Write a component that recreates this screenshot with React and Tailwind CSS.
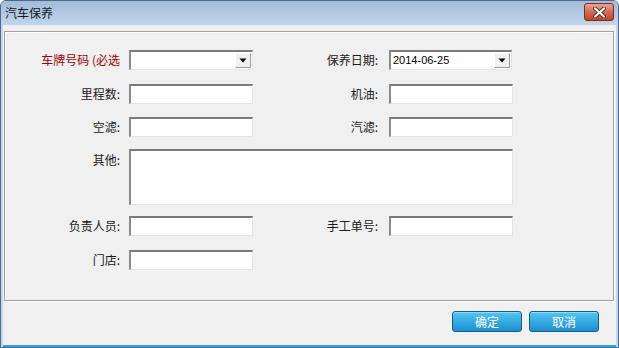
import React from "react";

const FONT = { fontFamily: '"Noto Sans CJK SC", "Liberation Sans", sans-serif' };

function Input({ w = "w-[124px]", children, dropdown }) {
  return (
    <div
      className={`${w} h-[20px] bg-white border-t-2 border-l-2 border-b border-r border-t-[#7a7a7a] border-l-[#8a8a8a] border-b-[#e4e4e4] border-r-[#e4e4e4] flex items-center relative`}
    >
      {children}
      {dropdown && (
        <div className="absolute right-[1px] top-[1px] bottom-[1px] w-[16px] bg-[#f0f0f0] border border-t-white border-l-white border-b-[#9a9a9a] border-r-[#9a9a9a] flex items-center justify-center">
          <svg width="8" height="5" viewBox="0 0 8 5">
            <polygon points="0.5,0.5 7.5,0.5 4,4.5" fill="#000" />
          </svg>
        </div>
      )}
    </div>
  );
}

function Label({ children, w, red }) {
  return (
    <div
      className={`${w} text-right text-[12px] leading-[14px] pr-[2px] ${red ? "text-[#a00000]" : "text-[#1a1a1a]"}`}
    >
      {children}
    </div>
  );
}

export default function App() {
  return (
    <div
      className="w-[619px] h-[348px] flex flex-col bg-[#c3d8ee] border border-[#50698a] rounded-t-[6px] overflow-hidden"
      style={FONT}
    >
      {/* Title bar */}
      <div className="h-[24px] shrink-0 flex items-center justify-between pl-[4px] pr-[4px] bg-gradient-to-b from-[#a3bcda] to-[#c1d5ec]">
        <span className="text-[12px] text-[#101820] leading-none">汽车保养</span>
        <div className="w-[30px] h-[18px] mt-[-2px] rounded-[3px] border border-[#7e2a1c] bg-gradient-to-b from-[#e5a696] via-[#d06a55] to-[#c2432c] flex items-center justify-center">
          <svg width="13" height="11" viewBox="0 0 13 11">
            <path
              d="M2 1.5 L11 9.5 M11 1.5 L2 9.5"
              stroke="#5a2a22"
              strokeWidth="4"
              strokeLinecap="round"
            />
            <path
              d="M2 1.5 L11 9.5 M11 1.5 L2 9.5"
              stroke="#ffffff"
              strokeWidth="2.2"
              strokeLinecap="round"
            />
          </svg>
        </div>
      </div>

      {/* Body */}
      <div className="flex-1 mx-[2px] bg-[#f0f0f0] flex flex-col border-b-2 border-[#29a6de]">
        {/* group panel */}
        <div className="mt-[6px] ml-[1px] mr-[2px] h-[270px] border border-[#a0a0a0] shadow-[inset_1px_1px_0_#ffffff,1px_1px_0_#ffffff] flex flex-col pt-[18px]">
          {/* row 1 */}
          <div className="flex items-center">
            <Label w="w-[117px]" red>
              车牌号码 (必选
            </Label>
            <div className="w-[7px]" />
            <Input dropdown />
            <Label w="w-[127px]">保养日期:</Label>
            <div className="w-[9px]" />
            <Input dropdown w="w-[123px]">
              <span
                className="pl-[2px] text-[11px] text-black"
                style={{ fontFamily: '"Liberation Sans", Arial, sans-serif' }}
              >
                2014-06-25
              </span>
            </Input>
          </div>
          {/* row 2 */}
          <div className="flex items-center mt-[14px]">
            <Label w="w-[117px]">里程数:</Label>
            <div className="w-[7px]" />
            <Input />
            <Label w="w-[127px]">机油:</Label>
            <div className="w-[9px]" />
            <Input />
          </div>
          {/* row 3 */}
          <div className="flex items-center mt-[13px]">
            <Label w="w-[117px]">空滤:</Label>
            <div className="w-[7px]" />
            <Input />
            <Label w="w-[127px]">汽滤:</Label>
            <div className="w-[9px]" />
            <Input />
          </div>
          {/* row 4 */}
          <div className="flex items-start mt-[12px]">
            <div className="pt-[4px]">
              <Label w="w-[117px]">其他:</Label>
            </div>
            <div className="w-[7px]" />
            <div className="w-[384px] h-[56px] bg-white border-t-2 border-l-2 border-b border-r border-t-[#7a7a7a] border-l-[#8a8a8a] border-b-[#e4e4e4] border-r-[#e4e4e4]" />
          </div>
          {/* row 5 */}
          <div className="flex items-center mt-[11px]">
            <Label w="w-[117px]">负责人员:</Label>
            <div className="w-[7px]" />
            <Input />
            <Label w="w-[127px]">手工单号:</Label>
            <div className="w-[9px]" />
            <Input />
          </div>
          {/* row 6 */}
          <div className="flex items-center mt-[14px]">
            <Label w="w-[117px]">门店:</Label>
            <div className="w-[7px]" />
            <Input />
          </div>
        </div>

        {/* buttons */}
        <div className="flex justify-end gap-[7px] mt-[10px] pr-[17px]">
          <button className="w-[70px] h-[21px] rounded-[3px] border border-[#1b5a86] bg-gradient-to-b from-[#52c6f2] to-[#1a8fd2] text-white text-[12px] leading-none shadow-[inset_0_1px_0_#8fdcf8]">
            确定
          </button>
          <button className="w-[70px] h-[21px] rounded-[3px] border border-[#1b5a86] bg-gradient-to-b from-[#52c6f2] to-[#1a8fd2] text-white text-[12px] leading-none shadow-[inset_0_1px_0_#8fdcf8]">
            取消
          </button>
        </div>
      </div>
    </div>
  );
}
